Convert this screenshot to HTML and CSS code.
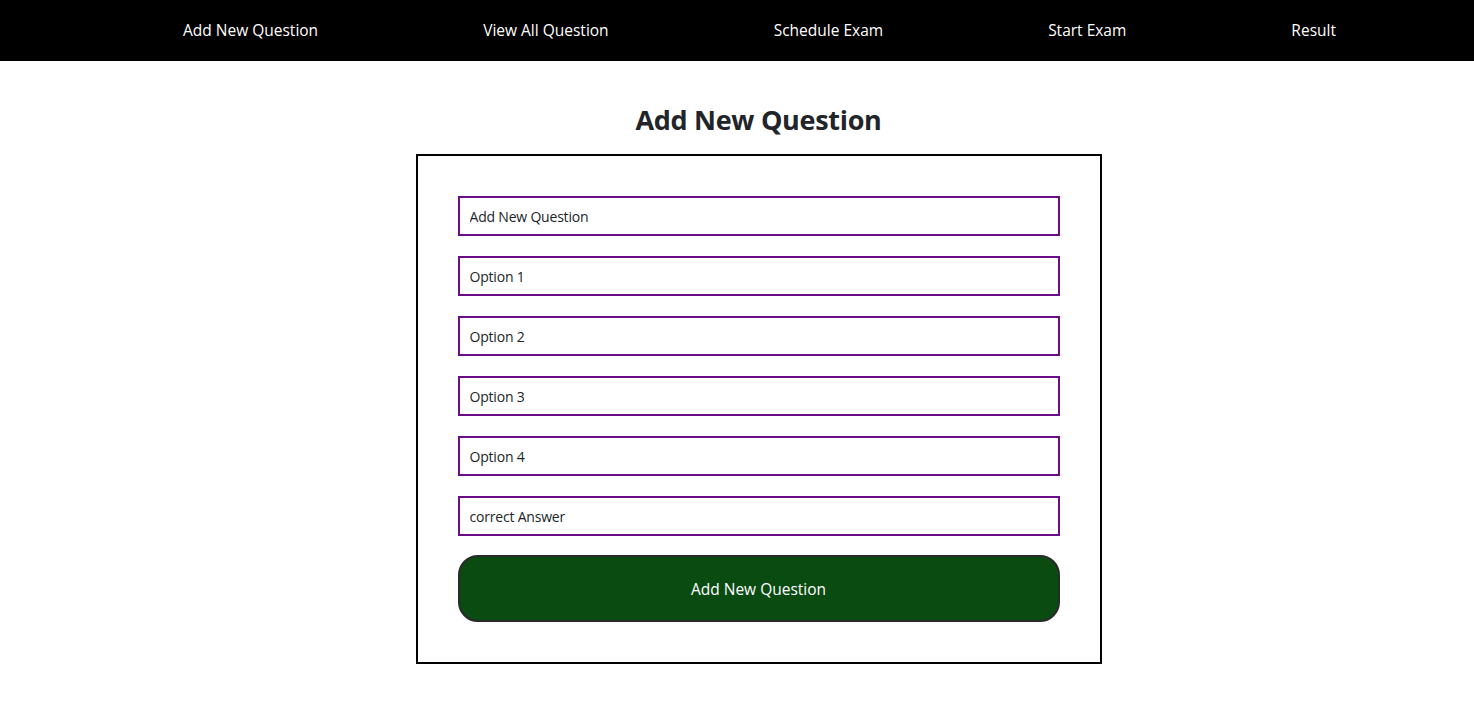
FILE: index.html
```html
<!DOCTYPE html>
<html lang="en">
<head>
<meta charset="utf-8">
<title>Add New Question</title>
<link rel="stylesheet" href="styles.css">
</head>
<body>
<nav class="navbar">
  <a class="nav-link" href="#">Add New Question</a>
  <a class="nav-link" href="#">View All Question</a>
  <a class="nav-link" href="#">Schedule Exam</a>
  <a class="nav-link" href="#">Start Exam</a>
  <a class="nav-link" href="#">Result</a>
</nav>
<main class="page">
  <h2 class="title">Add New Question</h2>
  <form class="form-box">
    <input class="field" type="text" placeholder="Add New Question">
    <input class="field" type="text" placeholder="Option 1">
    <input class="field" type="text" placeholder="Option 2">
    <input class="field" type="text" placeholder="Option 3">
    <input class="field" type="text" placeholder="Option 4">
    <input class="field" type="text" placeholder="correct Answer">
    <button class="submit" type="button">Add New Question</button>
  </form>
</main>
</body>
</html>
```

FILE: styles.css
```css
* { box-sizing: border-box; }
body {
  margin: 0;
  font-family: "Open Sans", "Noto Sans", sans-serif;
  background: #fff;
  color: #212529;
}
.navbar {
  height: 61px;
  background: #000;
  display: flex;
  align-items: center;
  justify-content: space-between;
  padding: 0 138px 2px 183px;
}
.nav-link {
  color: #fff;
  text-decoration: none;
  font-size: 15.5px;
}
.page {
  display: flex;
  flex-direction: column;
  align-items: center;
  padding-left: 43px;
}
.title {
  margin: 39px 0 14px;
  font-size: 27px;
  font-weight: 700;
  line-height: 40px;
  color: #212529;
  letter-spacing: -0.3px;
}
.form-box {
  width: 686px;
  border: 2px solid #000;
  padding: 40px;
  display: flex;
  flex-direction: column;
  gap: 20px;
}
.field {
  height: 40px;
  border: 2px solid #6b0d86;
  padding: 0 10px;
  font-family: inherit;
  font-size: 14px;
  color: #212529;
  outline: none;
}
.field::placeholder {
  color: #212529;
  opacity: 1;
  letter-spacing: -0.2px;
}
.submit {
  height: 67px;
  margin-top: -1px;
  background: #0a4b12;
  border: 2px solid #2a2a2a;
  border-radius: 20px;
  color: #fff;
  font-family: inherit;
  font-size: 15.5px;
}
```
